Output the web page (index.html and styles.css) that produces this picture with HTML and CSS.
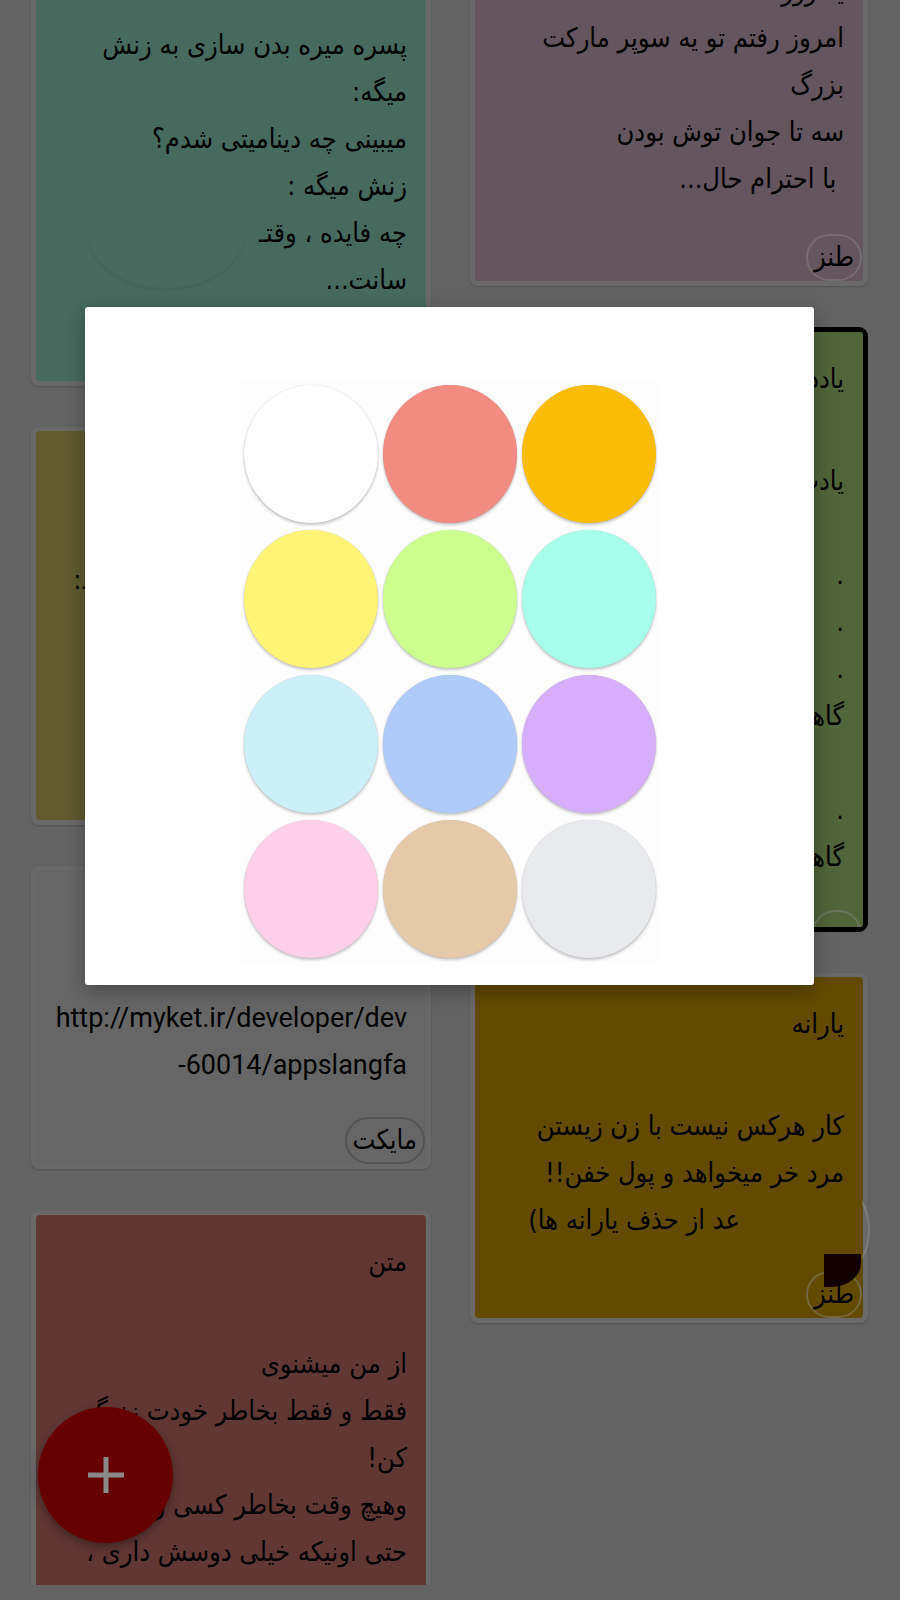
FILE: index.html
```html
<!DOCTYPE html>
<html lang="fa">
<head>
<meta charset="utf-8">
<title>یادداشت ها</title>
<link rel="stylesheet" href="styles.css">
</head>
<body>
<div class="screen">
  <div class="board">
    <div class="col col-a">
      <div class="card">
        <div class="note n-teal">
          <span class="ghost"></span>
          <div class="title">جوک</div>
          <div class="body">
            <div class="line">پسره میره بدن سازی به زنش</div>
            <div class="line">میگه:</div>
            <div class="line">میبینی چه دینامیتی شدم؟</div>
            <div class="line">زنش میگه :</div>
            <div class="line">چه فایده ، وقتـ</div>
            <div class="line">سانت...</div>
          </div>
          <div class="chip-row"><span class="chip">طنز</span></div>
        </div>
      </div>
      <div class="card">
        <div class="note n-olive">
          <div class="title">معلم</div>
          <div class="body">
            <div class="line">یه روز معلمه از شاگردش پرسید:</div>
            <div class="line">چرا دیر اومدی</div>
            <div class="line">گفت آقا</div>
          </div>
          <div class="chip-row"><span class="chip">طنز</span></div>
        </div>
      </div>
      <div class="card">
        <div class="note n-white">
          <div class="title">لینک</div>
          <div class="body">
            <div class="line ltr">http://myket.ir/developer/dev</div>
            <div class="line ltr">-60014/appslangfa</div>
          </div>
          <div class="chip-row"><span class="chip">مایکت</span></div>
        </div>
      </div>
      <div class="card card-last">
        <div class="note n-brown">
          <div class="title">متن</div>
          <div class="body">
            <div class="line">از من میشنوی</div>
            <div class="line">فقط و فقط بخاطر خودت زندگی</div>
            <div class="line">کن!</div>
            <div class="line">وهیچ وقت بخاطر کسی زندگی نکن</div>
            <div class="line">حتی اونیکه خیلی دوسش داری ،</div>
            <div class="line">چون ...</div>
          </div>
        </div>
      </div>
    </div>

    <div class="col col-b">
      <div class="card">
        <div class="note n-purple">
          <div class="title">سوپر مارکت</div>
          <div class="body">
            <div class="line">یه روز</div>
            <div class="line">امروز رفتم تو یه سوپر مارکت</div>
            <div class="line">بزرگ</div>
            <div class="line">سه تا جوان توش بودن</div>
            <div class="line">&nbsp;با احترام حال...</div>
          </div>
          <div class="chip-row"><span class="chip">طنز</span></div>
        </div>
      </div>
      <div class="card card-sel">
        <div class="note n-green">
          <div class="title">یادداشت</div>
          <div class="body">
            <div class="line">یادت باشه</div>
            <div class="line"></div>
            <div class="line">.</div>
            <div class="line">.</div>
            <div class="line">.</div>
            <div class="line">گاهی وقتا</div>
            <div class="line"></div>
            <div class="line">.</div>
            <div class="line">گاهی وقتا</div>
          </div>
          <div class="chip-row chip-tight"><span class="chip chip-round"></span></div>
        </div>
      </div>
      <div class="card card-glitch">
        <div class="note n-mustard">
          <div class="title">یارانه</div>
          <div class="body">
            <div class="line">کار هرکس نیست با زن زیستن</div>
            <div class="line">مرد خر میخواهد و پول خفن!!</div>
            <div class="line cut">عد از حذف یارانه ها)</div>
          </div>
          <div class="chip-row"><span class="chip">طنز</span></div>
          <span class="glitch-block"></span>
        </div>
        <span class="glitch-arc"><span class="glitch-ring"></span></span>
      </div>
    </div>
  </div>

  <div class="dialog">
    <div class="palette">
      <div class="cell"><span class="dot c-white"></span></div>
      <div class="cell"><span class="dot c-red"></span></div>
      <div class="cell"><span class="dot c-orange"></span></div>
      <div class="cell"><span class="dot c-yellow"></span></div>
      <div class="cell"><span class="dot c-green"></span></div>
      <div class="cell"><span class="dot c-teal"></span></div>
      <div class="cell"><span class="dot c-blue"></span></div>
      <div class="cell"><span class="dot c-darkblue"></span></div>
      <div class="cell"><span class="dot c-purple"></span></div>
      <div class="cell"><span class="dot c-pink"></span></div>
      <div class="cell"><span class="dot c-brown"></span></div>
      <div class="cell"><span class="dot c-gray"></span></div>
    </div>
  </div>

  <button class="fab" aria-label="add">
    <svg width="36" height="36" viewBox="0 0 36 36">
      <rect x="15.5" y="0" width="5" height="36" fill="#8a8a8a"/>
      <rect x="0" y="15.5" width="36" height="5" fill="#8a8a8a"/>
    </svg>
  </button>
</div>
</body>
</html>
```

FILE: styles.css
```css
* {
  box-sizing: border-box;
}

html,
body {
  margin: 0;
  padding: 0;
}

body {
  background: #636363;
  font-family: Roboto, "DejaVu Sans", sans-serif;
  width: 900px;
  height: 1600px;
  overflow: hidden;
}

.screen {
  position: relative;
  width: 900px;
  height: 1600px;
  background: #636363;
}

.board {
  height: 1585px;
  overflow: hidden;
  display: grid;
  grid-template-columns: 400px 398px;
  column-gap: 39px;
  padding-left: 31px;
  align-items: start;
}

.col {
  display: flex;
  flex-direction: column;
  gap: 41px;
}

.col-a {
  margin-top: -108px;
}

.col-b {
  margin-top: -162px;
}

.card {
  position: relative;
  padding: 4px 5px 5px 5px;
  border-radius: 8px;
  background: #696969;
  box-shadow: 0 1px 2px rgba(0, 0, 0, 0.18);
}

.card-last {
  margin-top: 1px;
}

.card-sel {
  padding: 0;
  background: #000;
  border: 5px solid #000;
  border-radius: 9px;
  box-shadow: none;
}

.note {
  position: relative;
  direction: rtl;
  display: flex;
  flex-direction: column;
  padding: 23px 19px 0;
  border-radius: 4px;
  overflow: hidden;
  font-family: "DejaVu Sans Condensed", "DejaVu Sans", sans-serif;
  font-size: 27px;
  line-height: 47px;
  color: #000;
}

.title,
.line {
  height: 47px;
  white-space: pre;
}

.body {
  margin-top: 55px;
}

.line.ltr {
  direction: ltr;
  text-align: right;
  font-family: Roboto, sans-serif;
  font-size: 27px;
}

.line.cut {
  padding-right: 104px;
}

.chip-row {
  display: flex;
  margin-top: auto;
  margin-right: -18px;
  flex-shrink: 0;
}

.chip-tight {
  margin-top: 30px;
}

.chip {
  display: inline-block;
  height: 47px;
  min-width: 50px;
  padding: 0 6px;
  border: 2px solid rgba(140, 140, 140, 0.45);
  border-radius: 24px;
  line-height: 42px;
  text-align: center;
  white-space: nowrap;
}

.chip-round {
  width: 50px;
}

.ghost {
  position: absolute;
  left: 50px;
  top: 272px;
  width: 160px;
  height: 120px;
  border-radius: 50%;
  box-shadow: 0 3px 2px rgba(0, 0, 0, 0.05);
}

.n-teal {
  height: 485px;
  background: #466a5e;
}

.n-olive {
  height: 389px;
  background: #5f5a30;
}

.n-white {
  height: 294px;
  background: #666666;
}

.n-white .chip {
  border-color: rgba(70, 70, 70, 0.55);
}

.n-brown {
  height: 500px;
  background: #613734;
}

.n-purple {
  height: 439px;
  background: #65555e;
}

.n-green {
  height: 595px;
  background: #506539;
  border-radius: 3px;
}

.n-mustard {
  height: 341px;
  background: #634a01;
}

.glitch-block {
  position: absolute;
  left: 349px;
  top: 277px;
  width: 37px;
  height: 33px;
  background: #120000;
  border-bottom-right-radius: 30px 24px;
}

.glitch-arc {
  position: absolute;
  left: 392px;
  top: 222px;
  width: 10px;
  height: 70px;
  overflow: hidden;
}

.glitch-ring {
  position: absolute;
  left: -112px;
  top: -25px;
  width: 120px;
  height: 120px;
  border-radius: 50%;
  border: 2px solid rgba(170, 170, 170, 0.35);
}

.dialog {
  position: absolute;
  left: 85px;
  top: 307px;
  width: 729px;
  height: 678px;
  background: #ffffff;
  border-radius: 3px;
  box-shadow: 0 6px 20px rgba(0, 0, 0, 0.3);
  display: flex;
  justify-content: center;
  padding-top: 75px;
}

.palette {
  display: grid;
  grid-template-columns: repeat(3, 139px);
  grid-template-rows: repeat(4, 145px);
  width: 417px;
  height: 580px;
}

.cell {
  display: flex;
  justify-content: center;
  padding-top: 3px;
  background: #fdfdfd;
}

.dot {
  display: block;
  width: 134px;
  height: 138px;
  border-radius: 50%;
  box-shadow: 0 2px 3px rgba(0, 0, 0, 0.22), 0 0 1px rgba(0, 0, 0, 0.2);
}

.c-white { background: #ffffff; }
.c-red { background: #f28b82; }
.c-orange { background: #fbbc04; }
.c-yellow { background: #fff475; }
.c-green { background: #ccff90; }
.c-teal { background: #a7ffeb; }
.c-blue { background: #cbf0f8; }
.c-darkblue { background: #aecbfa; }
.c-purple { background: #d7aefb; }
.c-pink { background: #fdcfe8; }
.c-brown { background: #e6c9a8; }
.c-gray { background: #e8eaed; }

.fab {
  position: absolute;
  left: 38px;
  top: 1407px;
  width: 135px;
  height: 136px;
  border: none;
  padding: 0;
  border-radius: 50%;
  background: #660000;
  box-shadow: 0 4px 10px rgba(0, 0, 0, 0.35);
  display: flex;
  align-items: center;
  justify-content: center;
}
```
